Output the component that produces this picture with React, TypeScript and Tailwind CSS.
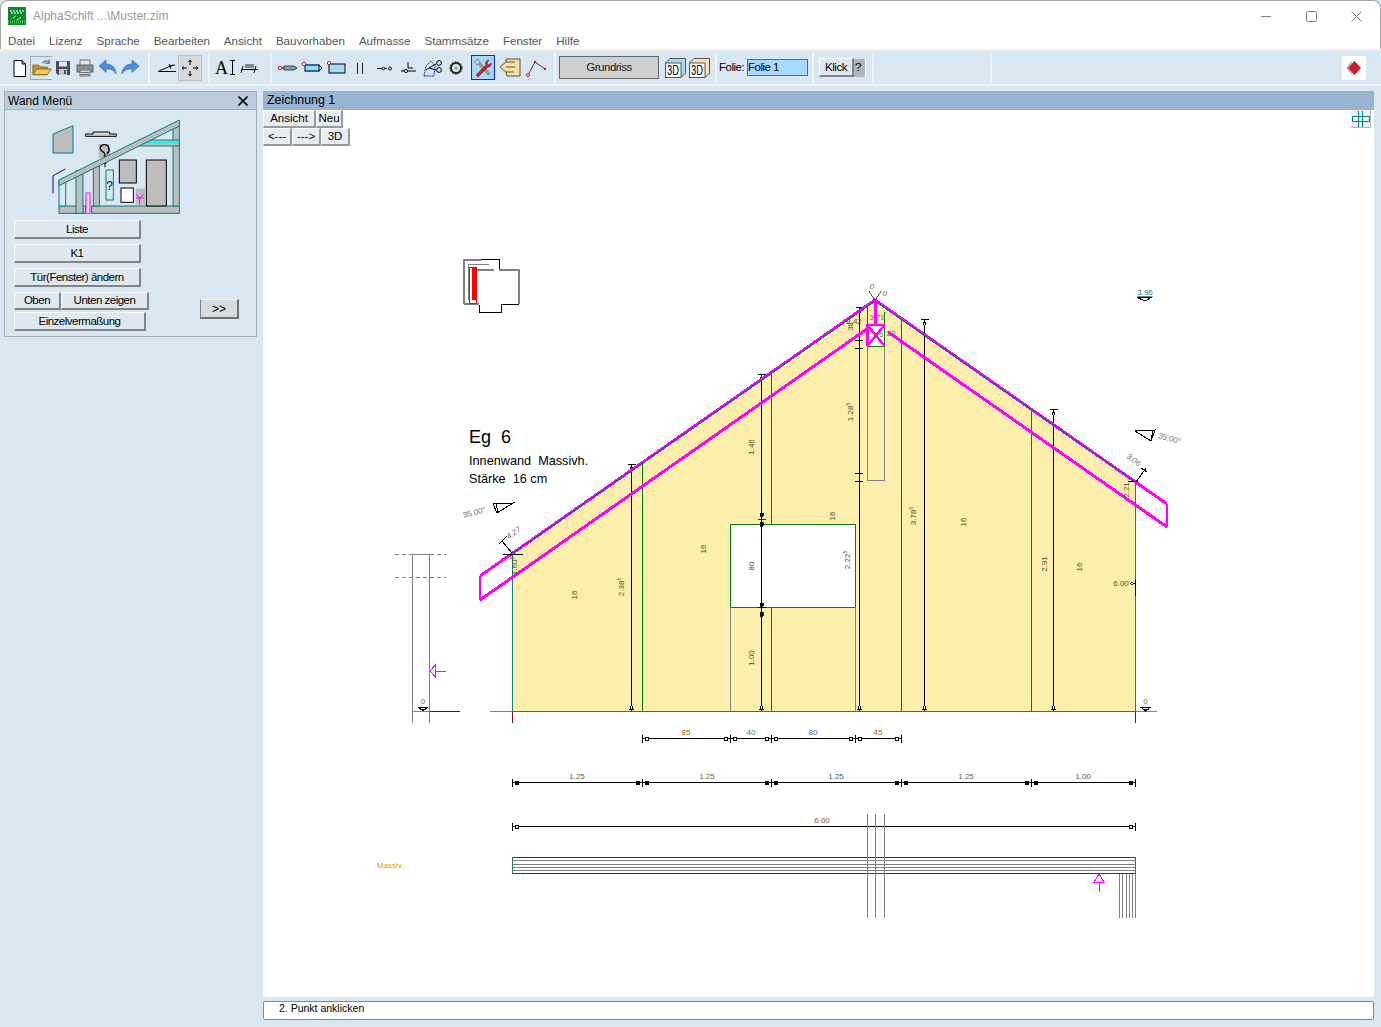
import type { ReactNode } from 'react'

const menus = ['Datei', 'Lizenz', 'Sprache', 'Bearbeiten', 'Ansicht', 'Bauvorhaben', 'Aufmasse', 'Stammsätze', 'Fenster', 'Hilfe']

const raisedButton =
  'flex items-center justify-center border border-t-white border-l-white border-r-2 border-b-2 border-r-[#7f8589] border-b-[#7f8589] bg-[#dfe8f0] pt-[1px] text-[11.5px] leading-none tracking-[-0.5px] text-black'
const canvasButton =
  'flex items-center justify-center border-t border-l border-r-2 border-b-2 border-t-white border-l-white border-r-[#9a9a9a] border-b-[#9a9a9a] bg-[#e8edf2] pt-[1px] text-[11.5px] leading-none text-black'

function Sep({ className }: { className: string }) {
  return <div className={`h-[30px] w-[2px] shrink-0 bg-[#f2f5f8] ${className}`} />
}

function Tool({ width, children, className = '' }: { width: string; children: ReactNode; className?: string }) {
  return <div className={`flex h-[24px] shrink-0 items-center justify-center ${width} ${className}`}>{children}</div>
}

function Ico({ children, w = 22, h = 22 }: { children: ReactNode; w?: number; h?: number }) {
  return (
    <svg width={w} height={h} viewBox={`0 0 ${w} ${h}`} fill="none">
      {children}
    </svg>
  )
}

function MiniCube({ top }: { top: string }) {
  return (
    <svg width="23" height="22" viewBox="0 0 23 22">
      <path d="M1.5 6 L6 1.5 H21.5 V16 L17 20.5 H1.5 Z" fill={top} stroke="#555" />
      <rect x="1.5" y="6" width="15.5" height="14.5" fill="#fff" stroke="#555" />
      <text x="9" y="18" textAnchor="middle" className="font-['Liberation_Sans',sans-serif] text-[14px]" fill="#000" textLength="12" lengthAdjust="spacingAndGlyphs">
        3D
      </text>
    </svg>
  )
}

function HouseIllustration() {
  return (
    <svg width="130" height="96" viewBox="157 85 390 288">
      <path d="M160 130 L220 105 V187 H160 Z" fill="#bdbdbd" stroke="#008080" strokeWidth="3" />
      <path d="M258 130 H280 V124 H330 V130 H350 V137 H258 Z" fill="#d8d8d8" stroke="#000" strokeWidth="3" />
      <rect x="297" y="160" width="33" height="42" fill="#bdbdbd" />
      <path d="M322 190 C332 182 330 162 314 162 C300 162 298 176 308 182 C318 188 318 194 312 198" fill="none" stroke="#000" strokeWidth="4" />
      <path d="M316 214 V230 M309 218 H320" stroke="#000" strokeWidth="3" />
      <path d="M160 308 V255 L197 235" fill="none" stroke="#101080" strokeWidth="3" />
      <rect x="178" y="346" width="80" height="22" fill="#bdbdbd" stroke="#008080" strokeWidth="3" />
      <rect x="276" y="346" width="263" height="22" fill="#bdbdbd" stroke="#008080" strokeWidth="3" />
      <rect x="178" y="270" width="20" height="76" fill="#d9e7f2" stroke="#008080" strokeWidth="3" />
      <rect x="229" y="240" width="21" height="128" fill="#bdbdbd" stroke="#008080" strokeWidth="3" />
      <rect x="281" y="225" width="18" height="121" fill="#bdbdbd" stroke="#008080" strokeWidth="3" />
      <rect x="520" y="100" width="19" height="246" fill="#bdbdbd" stroke="#008080" strokeWidth="3" />
      <path d="M396 166 L420 148 H539 V166 Z" fill="#bdbdbd" stroke="#008080" strokeWidth="3" />
      <path d="M405 156 H538" stroke="#19f0f0" strokeWidth="5" />
      <path d="M178 268 L539 88 V106 L178 285 Z" fill="#bdbdbd" stroke="#008080" strokeWidth="3" />
      <rect x="359" y="208" width="51" height="69" fill="#bdbdbd" stroke="#000" strokeWidth="3" />
      <rect x="440" y="208" width="60" height="138" fill="#bdbdbd" stroke="#000" strokeWidth="3" />
      <rect x="364" y="292" width="37" height="43" fill="#fff" stroke="#000" strokeWidth="3" />
      <rect x="319" y="238" width="22" height="90" fill="none" stroke="#008080" strokeWidth="3" />
      <text x="330" y="298" textAnchor="middle" fill="#000" className="font-['Liberation_Sans',sans-serif] text-[36px]">
        ?
      </text>
      <rect x="408" y="294" width="28" height="48" fill="#bdbdbd" />
      <path d="M409 310 L420 322 L432 310 M420 342 V322 M409 322 H432" fill="none" stroke="#ff00ff" strokeWidth="3" />
      <rect x="259" y="307" width="12" height="61" fill="#d9e7f2" stroke="#ff00ff" strokeWidth="3" />
    </svg>
  )
}

const wallGreen = '#0c7c10'
const pink = '#ff00ff'
const teal = '#0d8078'
const dimGrey = '#808080'

// horizontal dimension chains: y, ticks, labels
const chains = [
  {
    y: 738.5,
    solid: false,
    ticks: [642.5, 730.5, 771.5, 855.5, 901.5],
    labels: [
      { t: '85', x: 686, c: '#a5602a' },
      { t: '40', x: 751, c: '#3f7f80' },
      { t: '80', x: 813, c: '#3468a0' },
      { t: '45', x: 878, c: '#a5602a' },
    ],
  },
  {
    y: 782.5,
    solid: true,
    ticks: [512.5, 642.5, 771.5, 901.5, 1031.5, 1135.5],
    labels: [
      { t: '1.25', x: 577, c: '#6c5a50' },
      { t: '1.25', x: 707, c: '#6c5a50' },
      { t: '1.25', x: 836, c: '#3f6070' },
      { t: '1.25', x: 966, c: '#6c5a50' },
      { t: '1.00', x: 1083, c: '#3f6070' },
    ],
  },
  {
    y: 826.5,
    solid: false,
    ticks: [512.5, 1135.5],
    labels: [{ t: '6.00', x: 822, c: '#a04b2a' }],
  },
]

// vertical dimension lines in the gable
const uprights = [
  { x: 631.5, top: 464 },
  { x: 761.5, top: 374 },
  { x: 859.5, top: 307 },
  { x: 924.5, top: 319 },
  { x: 1053.5, top: 409 },
]

const rotated = [
  { t: '16', x: 577, y: 595 },
  { t: '2.38', sup: '5', x: 624, y: 587 },
  { t: '16', x: 706, y: 549 },
  { t: '1.46', x: 754, y: 447 },
  { t: '80', x: 754, y: 566 },
  { t: '1.00', x: 754, y: 658 },
  { t: '16', x: 835, y: 516 },
  { t: '2.22', sup: '5', x: 850, y: 560 },
  { t: '1.28', sup: '5', x: 853, y: 412 },
  { t: '38', sup: '5', x: 853, y: 325 },
  { t: '3.78', sup: '5', x: 916, y: 516 },
  { t: '16', x: 966, y: 522 },
  { t: '2.91', x: 1047, y: 564 },
  { t: '16', x: 1082, y: 567 },
  { t: '2.21', x: 1129, y: 490 },
  { t: '1.60', sup: '5', x: 517, y: 566 },
]

function LevelMark({ x, y, label, c = '#5a6a70' }: { x: number; y: number; label: string; c?: string }) {
  return (
    <g>
      <path d={`M${x - 5} ${y - 4} H${x + 5} L${x} ${y} Z M${x - 3} ${y - 1.5} H${x + 3}`} fill="none" stroke="#000" />
      <text x={x} y={y - 7} textAnchor="middle" fill={c} className="text-[8px]">
        {label}
      </text>
    </g>
  )
}

function Drawing() {
  return (
    <svg
      className="absolute inset-0 font-['Liberation_Sans',sans-serif]"
      width="1111"
      height="887"
      viewBox="263 110 1111 887"
      shapeRendering="crispEdges"
    >
      {/* small plan in the corner */}
      <g fill="none" strokeWidth="2">
        <path d="M464 304 V260 H481" stroke="#808080" />
        <path d="M481 259.5 H499 V270" stroke="#000" strokeWidth="1" />
        <path d="M499 270 H519 V304" stroke="#808080" />
        <path d="M519 304.5 H501 V312.5 H479.5 V304.5" stroke="#000" strokeWidth="1" />
        <path d="M479 304 H464" stroke="#808080" />
        <path d="M468.5 300 V264.5 H489" stroke="#808080" strokeWidth="1" />
        <path d="M474 270 H494" stroke="#808080" />
        <rect x="469.5" y="267" width="6.5" height="36" stroke="#ff0000" strokeWidth="1" />
        <rect x="472" y="268" width="3.5" height="32" fill="#ff0000" stroke="none" />
      </g>

      {/* heading */}
      <text x="469" y="443" fill="#000" className="whitespace-pre text-[18px]">Eg  6</text>
      <text x="469" y="465" fill="#000" className="whitespace-pre text-[12.7px]">Innenwand  Massivh.</text>
      <text x="469" y="483" fill="#000" className="whitespace-pre text-[12.7px]">Stärke  16 cm</text>

      {/* gable */}
      <path d="M512.5 553.5 L875 301 L1135.5 482 V711.5 H512.5 Z" fill="#fdeeab" />
      <rect x="730.5" y="524.5" width="125" height="83" fill="#fff" stroke={wallGreen} />
      <path d="M730.5 607 V711 M855.5 607 V711" stroke={dimGrey} />
      <rect x="867.5" y="346" width="17" height="134.5" fill="none" stroke={dimGrey} />

      <path d="M642.5 463 V711 M771.5 374 V524 M771.5 608 V711 M901.5 318 V711" stroke={wallGreen} fill="none" />
      <path d="M1031.5 408 V711" stroke="#2f6b10" />
      <path d="M867.5 307 V325 M884.5 312 V325" stroke={wallGreen} />

      {/* dimension lines in the wall */}
      {uprights.map((u) => (
        <g key={u.x} stroke="#000" fill="none">
          <path d={`M${u.x} ${u.top} V711 M${u.x - 4} ${u.top + 0.5} H${u.x + 4} M${u.x - 4} 711 H${u.x + 4}`} strokeWidth="1" />
          <path d={`M${u.x - 1.5} ${u.top + 3} h3 l-1.5 4 Z M${u.x - 1.5} 709 h3 l-1.5 -4 Z`} fill="#fdeeab" />
        </g>
      ))}
      <path d="M757.5 519.5 H765.5 M757.5 607.5 H765.5 M760 522 h3 v4 h-3 Z M760 513 h3 v3 h-3 Z M760 603 h3 v3 h-3 Z M760 612 h3 v4 h-3 Z" stroke="#000" fill="#000" strokeWidth="0.8" />
      <path d="M855 340 H863 M855 348 H863 M855 473 H863 M855 481 H863" stroke="#000" />

      <path d="M512.5 553.5 V711.5 H1135.5 V482" fill="none" stroke={teal} />
      <path d="M490 711.5 H512 M1136 711.5 H1157" stroke={dimGrey} />
      <path d="M512.5 712 V723 M1135.5 712 V723" stroke="#8a1010" />
      <path d="M1131 583.5 H1135 M1135.5 579 V596" stroke="#000" />
      <circle cx="1132" cy="583.5" r="1.3" fill="#fff" stroke="#000" strokeWidth="0.8" />

      {/* rafters */}
      <path d="M480 576 L875 300 L1167 504" fill="none" stroke={pink} strokeWidth="3" />
      <path d="M512.5 553.5 L875 301 L1135.5 482" fill="none" stroke="#0f6a78" strokeWidth="1" />
      <path d="M480 600 L867 329 M888 332 L1167 527" fill="none" stroke={pink} strokeWidth="3" />
      <path d="M480 576 V600 M1167 504 V527" stroke={pink} strokeWidth="1.5" />

      {/* ridge */}
      <rect x="867.5" y="325" width="17" height="21" fill="#fff" />
      <path d="M867.5 346 H884.5 V325" fill="none" stroke={wallGreen} />
      <path d="M875.5 300 V325 M867.5 346 V325 H884.5 M867.5 325 L884.5 346 M884.5 325 L867.5 346" fill="none" stroke={pink} strokeWidth="2.4" />
      <path d="M875 300 L869 291 M875 300 L881 291" stroke="#7a1010" strokeWidth="0.8" />
      <text x="872" y="289" textAnchor="middle" fill="#a0564a" className="text-[8px] italic">0</text>
      <text x="885" y="296" textAnchor="middle" fill="#a0564a" className="text-[8px] italic">0</text>
      <text x="877" y="320" textAnchor="middle" fill="#5a7a80" className="text-[8px]">3.71</text>
      <text x="854" y="324" textAnchor="middle" fill="#5a5a40" className="text-[8px]">2.42</text>
      <text x="879" y="337" textAnchor="middle" fill="#6a6040" className="text-[8px]">16</text>
      <text x="891" y="336" textAnchor="middle" fill="#6a6040" className="text-[8px]">20</text>

      {rotated.map((r) => (
        <text key={`${r.x}-${r.y}`} transform={`translate(${r.x} ${r.y}) rotate(-90)`} textAnchor="middle" fill="#4f4a38" className="text-[8px]">
          {r.t}
          {r.sup && (
            <tspan dy="-3" className="text-[5px]">
              {r.sup}
            </tspan>
          )}
        </text>
      ))}
      <text x="1121" y="586" textAnchor="middle" fill="#6c4a30" className="text-[8px]">6.00</text>

      {/* slope marks */}
      <path d="M493 504 L513 503 L497 513 Z M496 504 L498 512" fill="none" stroke="#000" strokeWidth="1" />
      <text transform="translate(475 515) rotate(-15)" textAnchor="middle" fill="#6a7080" className="text-[8px]">35.00°</text>
      <path d="M1155 430 L1135 431 L1151 441 Z M1153 431 L1151 440" fill="none" stroke="#000" strokeWidth="1" />
      <text transform="translate(1169 441) rotate(15)" textAnchor="middle" fill="#6a7080" className="text-[8px]">35.00°</text>
      <path d="M512 553 L502 541 M499 544 L507 536 M1136 482 L1146 468 M1141 468 L1147 472" stroke="#000" strokeWidth="1" />
      <text transform="translate(515 535) rotate(-35)" textAnchor="middle" fill="#6a7080" className="text-[8px] italic">4.27</text>
      <text transform="translate(1132 462) rotate(35)" textAnchor="middle" fill="#6a7080" className="text-[8px] italic">3.06</text>
      <path d="M1128 481.5 H1138 M503 554.5 H523" stroke="#000" fill="none" />

      <text x="1145" y="295" textAnchor="middle" fill="#2f6f90" className="text-[8px] underline">3.96</text>
      <path d="M1137 297.5 H1151 L1145 301 Z" fill="none" stroke="#000" strokeWidth="1" />
      <LevelMark x={1145.5} y={711} label="0" />

      {/* wall section on the left */}
      <path d="M412.5 554 V723 M429.5 554 V723 M412 554.5 H430 M412 711.5 H429" stroke={dimGrey} fill="none" />
      <path d="M395 554.5 H412 M430 554.5 H446 M395 577.5 H446" stroke={dimGrey} strokeDasharray="4 3" />
      <path d="M429.5 711.5 H460" stroke="#1010c0" />
      <path d="M430 671 L435 665.5 V676.5 Z M435 671 H446" fill="none" stroke={pink} />
      <LevelMark x={423} y={711} label="0" />

      {/* dimension chains */}
      {chains.map((ch) => (
        <g key={ch.y}>
          <path d={`M${ch.ticks[0]} ${ch.y} H${ch.ticks[ch.ticks.length - 1]}`} stroke="#000" strokeWidth="1" />
          {ch.ticks.map((x, i) => (
            <g key={x}>
              <path d={`M${x} ${ch.y - 4} V${ch.y + 4}`} stroke="#000" />
              {i < ch.ticks.length - 1 && <rect x={x + 3} y={ch.y - 1.5} width="3" height="3" fill={ch.solid ? '#000' : '#fff'} stroke="#000" strokeWidth="1" />}
              {i > 0 && <rect x={x - 6} y={ch.y - 1.5} width="3" height="3" fill={ch.solid ? '#000' : '#fff'} stroke="#000" strokeWidth="1" />}
            </g>
          ))}
          {ch.labels.map((l) => (
            <text key={l.x} x={l.x} y={ch.y - 3.5} textAnchor="middle" fill={l.c} className="text-[8px]">
              {l.t}
            </text>
          ))}
        </g>
      ))}

      {/* plan strip */}
      <text x="377" y="868" fill="#c9a227" className="text-[8px]">Massiv</text>
      <path d="M512.5 860.5 H1135.5 M512.5 864.5 H1135.5 M512.5 867.5 H1135.5 M512.5 870.5 H1135.5" stroke={dimGrey} />
      <path d="M512.5 857.5 H1135.5 M512.5 873.5 H1135.5" stroke="#6a1070" />
      <path d="M512.5 857 V874 M1135.5 857 V874" stroke={teal} />
      <path d="M867.5 814 V918 M875.5 814 V918 M884.5 814 V918" stroke={dimGrey} />
      <path d="M1119.5 874 V918 M1122.5 874 V918 M1126 874 V918 M1129.5 874 V918 M1132.5 874 V918 M1135.5 874 V918" stroke={dimGrey} />
      <path d="M1099 874 L1104 882 H1094 Z M1099 882 V892" fill="none" stroke={pink} />
    </svg>
  )
}

export default function App() {
  return (
    <div className="flex h-[1027px] w-[1381px] flex-col overflow-hidden bg-[#d9e7f2] font-['Liberation_Sans',sans-serif]">
      <div className="flex h-[33px] shrink-0 items-center rounded-t-lg border-l border-r border-t border-[#a8a8a8] bg-white pb-[2px] pl-[7px]">
        <svg width="18" height="18" viewBox="0 0 18 18">
          <rect width="18" height="18" fill="#0a8a2c" />
          <path d="M2 4 H16 M3 6 H15 M5 11 L8 9 M9 13 L13 10" stroke="#fff" strokeWidth="1" strokeDasharray="2 1" />
          <path d="M0 15 H18" stroke="#35c040" strokeWidth="3" strokeDasharray="1 1" />
        </svg>
        <span className="ml-[7px] text-[12px] text-[#9a9a9a]">AlphaSchift ...\Muster.zim</span>
        <div className="ml-auto flex items-center gap-[34px] pr-[18px]">
          <svg width="11" height="11" viewBox="0 0 11 11"><path d="M0 5.5 H10" stroke="#808080" /></svg>
          <svg width="11" height="11" viewBox="0 0 11 11"><rect x="0.5" y="0.5" width="10" height="10" fill="none" stroke="#808080" rx="1" /></svg>
          <svg width="11" height="11" viewBox="0 0 11 11"><path d="M0.5 0.5 L10.5 10.5 M10.5 0.5 L0.5 10.5" stroke="#808080" /></svg>
        </div>
      </div>

      <div className="flex h-[16px] shrink-0 items-center gap-[14px] border-l border-r border-[#a8a8a8] bg-white pl-[7px] text-[11.6px] text-[#555]">
        {menus.map((m) => (
          <span key={m}>{m}</span>
        ))}
      </div>

      <div className="h-[2px] shrink-0 bg-[#f0f0f0]" />

      <div className="flex h-[33px] shrink-0 items-center bg-[#d9e7f2] pl-[8px]">
        <Tool width="w-[22px]">
          <Ico><path d="M6 3.5 H14 L17.5 7 V19.5 H6 Z M14 3.5 V7 H17.5" fill="#fff" stroke="#000" /></Ico>
        </Tool>
        <Tool width="w-[22px]" className="border border-[#a0a8b0] border-r-0">
          <Ico>
            <path d="M2 8 H8 L10 10 H17 V18 H2 Z" fill="#c69420" stroke="#8a6a18" />
            <path d="M2 18 L6 12 H21 L17 18 Z" fill="#f2c858" stroke="#8a6a18" />
            <path d="M12 6 C14 3 17 3 19 5 M19 2 V6 H15" fill="none" stroke="#5a80a8" strokeWidth="1.4" />
          </Ico>
        </Tool>
        <Tool width="w-[22px]">
          <Ico>
            <path d="M4 4 H18 V18 H6 L4 16 Z" fill="#47505a" />
            <rect x="7" y="4.5" width="8" height="5" fill="#e8e8e8" />
            <rect x="7" y="12" width="8" height="6" fill="#c0c8d0" />
            <rect x="12" y="13" width="2" height="4" fill="#47505a" />
          </Ico>
        </Tool>
        <Tool width="w-[22px]">
          <Ico>
            <rect x="6" y="3" width="10" height="6" fill="#e8e8e8" stroke="#707070" />
            <rect x="3" y="8" width="16" height="7" fill="#8a9298" stroke="#606060" />
            <rect x="6" y="13" width="10" height="6" fill="#d8d8d8" stroke="#707070" />
            <path d="M7 15.5 H15 M7 17.5 H15" stroke="#707070" />
          </Ico>
        </Tool>
        <Tool width="w-[23px]">
          <Ico><path d="M2 9 L9 3 V7 C15 7 19 11 19 17 C17 13 14 12 9 12 V15.5 Z" fill="#4a8ed8" stroke="#2a62a8" strokeWidth="0.6" /></Ico>
        </Tool>
        <Tool width="w-[22px]">
          <Ico><path d="M20 9 L13 3 V7 C7 7 3 11 3 17 C5 13 8 12 13 12 V15.5 Z" fill="#4a8ed8" stroke="#2a62a8" strokeWidth="0.6" /></Ico>
        </Tool>
        <Sep className="ml-[7px]" />
        <Tool width="w-[24px]" className="ml-[5px]">
          <Ico><path d="M2 14.5 H20 M3 14 L17 8 M13 7 L15 12 M14 9 L19 8" fill="none" stroke="#000" /></Ico>
        </Tool>
        <Tool width="w-[22px]" className="bg-[#d9d9d9] outline outline-1 outline-[#b8c0c8]">
          <Ico>
            <path d="M11 3 V8 M11 14 V19 M3 11 H8 M14 11 H19 M9.5 5 L11 3 L12.5 5 M9.5 17 L11 19 L12.5 17 M5 9.5 L3 11 L5 12.5 M17 9.5 L19 11 L17 12.5" fill="none" stroke="#000" />
          </Ico>
        </Tool>
        <Sep className="ml-[7px]" />
        <Tool width="w-[24px]" className="ml-[3px] gap-[2px]">
          <span className="font-['Liberation_Serif',serif] text-[18px] leading-none text-black">A</span>
          <svg width="5" height="15" viewBox="0 0 5 15"><path d="M0 0.5 H5 M2.5 0.5 V14.5 M0 14.5 H5" stroke="#000" fill="none" /></svg>
        </Tool>
        <Tool width="w-[24px]">
          <Ico>
            <rect x="7" y="7" width="9" height="4" fill="#808890" />
            <path d="M3 12.5 H20 M5 9 L3 16 M18 9 L16 16" fill="none" stroke="#000" />
          </Ico>
        </Tool>
        <Sep className="ml-[9px]" />
        <Tool width="w-[24px]" className="ml-[4px]">
          <Ico>
            <circle cx="3" cy="11" r="1.6" fill="#fff" stroke="#e01010" />
            <path d="M5 11 H7" stroke="#000" />
            <path d="M7 9 H17 L20 11 L17 13 H7 Z" fill="#7ca0c0" stroke="#404040" />
          </Ico>
        </Tool>
        <Tool width="w-[24px]">
          <Ico>
            <rect x="4" y="8" width="14" height="6" fill="#9fd8f0" stroke="#000" />
            <path d="M18 8 L21 11 L18 14" fill="none" stroke="#000" />
            <path d="M3 8 H16 M4 14 H18" stroke="#0060c0" />
            <circle cx="3" cy="7" r="1.7" fill="#fff" stroke="#e01010" />
          </Ico>
        </Tool>
        <Tool width="w-[24px]">
          <Ico>
            <rect x="4" y="7" width="16" height="9" fill="#a8dcf0" stroke="#000" />
            <circle cx="4" cy="6" r="1.7" fill="#fff" stroke="#e01010" />
          </Ico>
        </Tool>
        <Tool width="w-[24px]">
          <Ico><path d="M8.5 6 V17 M13.5 6 V17" stroke="#202020" /></Ico>
        </Tool>
        <Tool width="w-[25px]">
          <Ico>
            <path d="M3 11.5 H8 M11 11.5 H13" stroke="#000" />
            <circle cx="9.5" cy="11.5" r="1.3" fill="#fff" stroke="#000" />
            <circle cx="16" cy="11.5" r="1.5" fill="#fff" stroke="#000" />
          </Ico>
        </Tool>
        <Tool width="w-[23px]">
          <Ico>
            <path d="M10 5 V11 H15 M3 14 H6 M10 14 H18" fill="none" stroke="#000" />
            <circle cx="8" cy="14" r="1.6" fill="#fff" stroke="#000" />
          </Ico>
        </Tool>
        <Tool width="w-[24px]">
          <Ico>
            <path d="M3 19 L5 9 L10 4 L14 9 L13 19 Z" fill="none" stroke="#1030e0" strokeDasharray="2 0.6" />
            <path d="M8 11 L15 7 M8 11 L15 13 M5 13 L8 11" stroke="#000" />
            <circle cx="18" cy="6" r="2.4" fill="none" stroke="#000" />
            <circle cx="18" cy="13" r="2.4" fill="none" stroke="#000" />
          </Ico>
        </Tool>
        <Tool width="w-[24px]">
          <Ico>
            <circle cx="11" cy="11" r="5" fill="none" stroke="#202020" strokeWidth="2" />
            <circle cx="11" cy="11" r="1.5" fill="#909090" />
            <circle cx="11" cy="11" r="6.2" fill="none" stroke="#202020" strokeDasharray="1.5 1.5" />
          </Ico>
        </Tool>
        <div className="ml-[3px] flex h-[25px] w-[24px] shrink-0 items-center justify-center border border-[#0a2ad8] bg-[#a8d8f8]">
          <Ico>
            <path d="M4 4 L17 18 M5 3 L18 17" stroke="#9098a0" strokeWidth="2" />
            <path d="M17 3 C14 3 13 6 14 8 L4 18 L6 20 L16 10 C18 10 20 8 19 6 L17 8 L15 6 Z" fill="#c02828" stroke="#601010" strokeWidth="0.5" />
            <path d="M2 5 L6 2 L8 5 L5 8 Z" fill="#c8d0d8" stroke="#606870" strokeWidth="0.6" />
          </Ico>
        </div>
        <Tool width="w-[26px]" className="ml-[2px]">
          <Ico>
            <path d="M1 10 L7 5 V2 H21 V19 H8 L7 15 Z" fill="#f2e2a8" stroke="#605030" />
            <path d="M7 5 H16 M7 10 H16 M7 15 H15" fill="none" stroke="#605030" />
          </Ico>
        </Tool>
        <Tool width="w-[26px]">
          <Ico>
            <path d="M3 18 L10 5 L20 12" fill="none" stroke="#404040" />
            <circle cx="3" cy="18" r="1.5" fill="#fff" stroke="#c02020" />
            <circle cx="10" cy="5" r="1.3" fill="#c02020" />
            <circle cx="20" cy="12" r="1.3" fill="#c02020" />
          </Ico>
        </Tool>
        <Sep className="ml-[5px]" />
        <div className="ml-[3px] flex h-[23px] w-[100px] shrink-0 items-center justify-center border border-[#666] bg-[#cfcfcf] text-[11.5px] tracking-[-0.5px] text-[#222]">
          Grundriss
        </div>
        <div className="ml-[5px] shrink-0"><MiniCube top="#a8dcec" /></div>
        <div className="ml-[1px] shrink-0"><MiniCube top="#f2e4b0" /></div>
        <Sep className="ml-[4px]" />
        <span className="ml-[2px] w-[25px] shrink-0 text-[11.5px] tracking-[-0.5px] text-black">Folie:</span>
        <div className="ml-[3px] flex h-[17px] w-[61px] shrink-0 items-center border border-[#606870] bg-[#a8daff] text-[11.5px] leading-none tracking-[-0.5px] text-black">Folie 1</div>
        <Sep className="ml-[4px]" />
        <div className={`ml-[5px] h-[19px] w-[35px] shrink-0 ${raisedButton}`}>Klick</div>
        <div className="flex h-[18px] w-[12px] shrink-0 items-center border-r border-white bg-[#b4b4b4] pl-[1px] text-[11.5px] leading-none text-black">?</div>
        <Sep className="ml-[6px]" />
        <Sep className="ml-[116px]" />
        <div className="ml-auto mr-[15px] flex h-[24px] w-[24px] shrink-0 items-center justify-center bg-white">
          <svg width="18" height="18" viewBox="0 0 18 18">
            <path d="M4 9 L9 3 M4 9 L9 15" stroke="#b0b0b0" strokeWidth="1.4" fill="none" transform="translate(-2 0)" />
            <path d="M9.5 2 L16 9 L9.5 16 L3 9 Z" fill="#cc1a28" />
          </svg>
        </div>
      </div>

      <div className="h-[2px] shrink-0 bg-[#eef1f4]" />

      <div className="flex min-h-0 flex-1 pl-[4px] pt-[5px]">
        <div className="h-[246px] w-[253px] shrink-0 border border-[#a5adb5]">
          <div className="flex h-[18px] items-center justify-between border-b border-[#a5adb5] bg-[#bbcddd] pl-[3px] pr-[8px] text-[12px] text-black">
            <span>Wand Menü</span>
            <svg width="10" height="10" viewBox="0 0 10 10"><path d="M0.5 0.5 L9.5 9.5 M9.5 0.5 L0.5 9.5" stroke="#000" strokeWidth="1.6" /></svg>
          </div>
          <div className="pl-[9px] pt-[9px]">
            <div className="ml-[38px] h-[96px]"><HouseIllustration /></div>
            <div className={`mt-[5px] h-[19px] w-[127px] ${raisedButton}`}>Liste</div>
            <div className={`mt-[5px] h-[19px] w-[127px] ${raisedButton}`}>K1</div>
            <div className={`mt-[5px] h-[19px] w-[127px] ${raisedButton}`}>Tür(Fenster) ändern</div>
            <div className="relative">
              <div className="mt-[5px] flex">
                <div className={`h-[18px] w-[47px] ${raisedButton}`}>Oben</div>
                <div className={`h-[18px] w-[88px] ${raisedButton}`}>Unten zeigen</div>
              </div>
              <div className={`mt-[2px] h-[19px] w-[132px] ${raisedButton}`}>Einzelvermaßung</div>
              <div className="absolute left-[186px] top-[7px] flex h-[20px] w-[39px] items-center justify-center border border-t-white border-l-[#808080] border-r-2 border-b-2 border-r-[#707070] border-b-[#707070] bg-[#d4dce2] text-[12px] leading-none">
                &gt;&gt;
              </div>
            </div>
          </div>
        </div>

        <div className="ml-[6px] flex w-[1111px] shrink-0 flex-col">
          <div className="flex h-[19px] shrink-0 items-center bg-[#9ab3d1] pl-[4px] text-[12.4px] text-black">Zeichnung 1</div>
          <div className="relative h-[887px] shrink-0 bg-white">
            <Drawing />
            <div className="relative flex">
              <div className={`h-[18px] w-[53px] ${canvasButton}`}>Ansicht</div>
              <div className={`h-[18px] w-[27px] ${canvasButton}`}>Neu</div>
            </div>
            <div className="relative flex">
              <div className={`h-[18px] w-[29px] ${canvasButton}`}>&lt;---</div>
              <div className={`h-[18px] w-[29px] ${canvasButton}`}>---&gt;</div>
              <div className={`h-[18px] w-[29px] ${canvasButton}`}>3D</div>
            </div>
            <div className="absolute right-[3px] top-0 flex h-[18px] w-[20px] items-center justify-center border-b border-r border-[#b0b8c0] bg-[#f0f0f0]">
              <svg width="18" height="16" viewBox="0 0 18 16">
                <path d="M0.5 5.5 H17.5 V10.5 H0.5 Z M6.5 0 V16 M10.5 0 V16" fill="none" stroke="#008080" />
              </svg>
            </div>
          </div>
          <div className="mt-[4px] flex h-[19px] shrink-0 items-center rounded-[2px] border border-[#808890] bg-white pb-[4px] pl-[15px] text-[10.5px] text-black">
            2. Punkt anklicken
          </div>
        </div>
      </div>
    </div>
  )
}
